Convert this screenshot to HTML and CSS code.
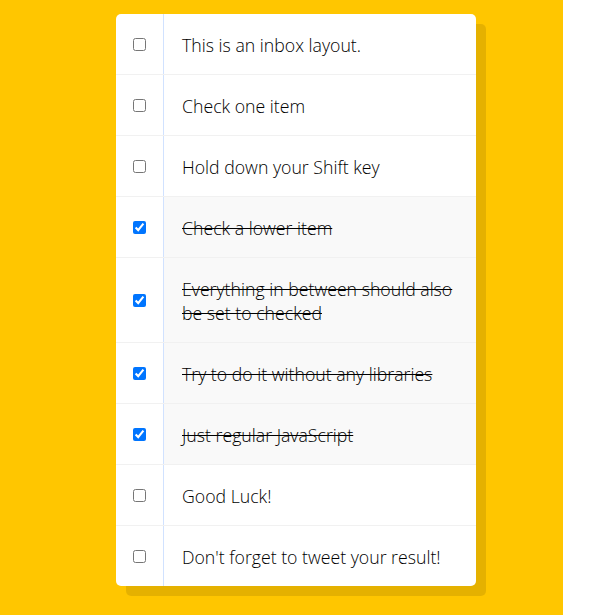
FILE: index.html
```html
<!DOCTYPE html>
<html>
<head>
<meta charset="utf-8">
<link rel="stylesheet" href="styles.css">
</head>
<body>
<div class="page">
  <div class="inbox">
    <div class="item"><input type="checkbox"><p>This is an inbox layout.</p></div>
    <div class="item"><input type="checkbox"><p>Check one item</p></div>
    <div class="item"><input type="checkbox"><p>Hold down your Shift key</p></div>
    <div class="item"><input type="checkbox" checked><p>Check a lower item</p></div>
    <div class="item"><input type="checkbox" checked><p>Everything in between should also be set to checked</p></div>
    <div class="item"><input type="checkbox" checked><p>Try to do it without any libraries</p></div>
    <div class="item"><input type="checkbox" checked><p>Just regular JavaScript</p></div>
    <div class="item"><input type="checkbox"><p>Good Luck!</p></div>
    <div class="item"><input type="checkbox"><p>Don't forget to tweet your result!</p></div>
  </div>
</div>
</body>
</html>
```
FILE: styles.css
```css
html, body {
  margin: 0;
  padding: 0;
  background: #fff;
}
.page {
  width: 563px;
  height: 615px;
  background: #ffc600;
  padding-top: 14px;
  box-sizing: border-box;
}
.inbox {
  width: 360px;
  margin: 0 0 0 116px;
  background: #fff;
  border-radius: 5px;
  box-shadow: 10px 10px 0 rgba(0, 0, 0, 0.1);
  overflow: hidden;
}
.item {
  display: flex;
  align-items: center;
  border-bottom: 1px solid #f1f1f1;
}
.item:last-child {
  border-bottom: 0;
}
.item input {
  margin: 0 17px;
  width: 13px;
  height: 13px;
  flex: none;
}
.item p {
  margin: 0;
  flex: 1;
  padding: 19px 18px 17px;
  font-family: "Open Sans", sans-serif;
  font-weight: 300;
  font-size: 17.7px;
  line-height: 24px;
  color: #000;
  border-left: 1px solid #d1e2ff;
}
.item input:checked + p {
  background: #f9f9f9;
  text-decoration: line-through;
}
```
